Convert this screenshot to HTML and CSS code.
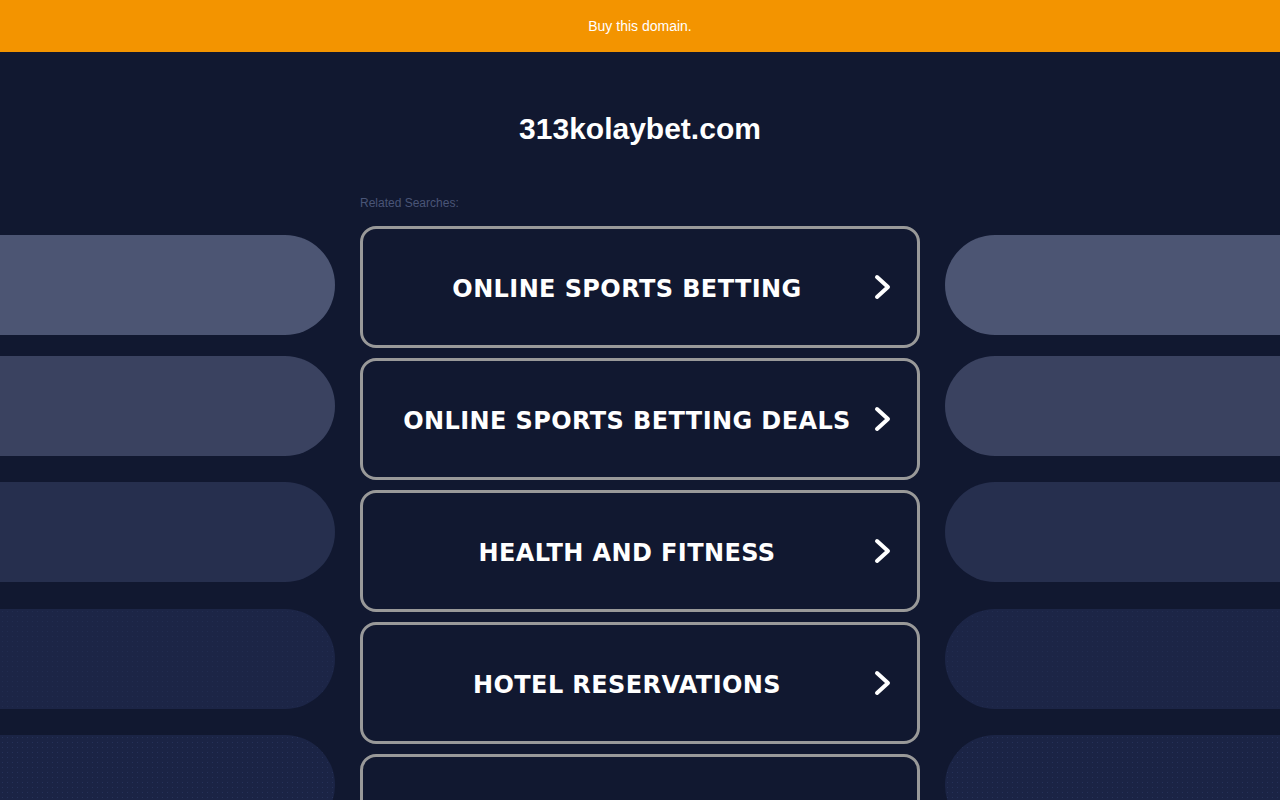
FILE: index.html
```html
<!DOCTYPE html>
<html>
<head>
<meta charset="utf-8">
<title>313kolaybet.com</title>
<link rel="stylesheet" href="styles.css">
</head>
<body>
<div class="topbar"><a class="buy" href="#">Buy this domain.</a></div>
<div class="stage">
  <div class="side side-left">
    <div class="pill p1"></div>
    <div class="pill p2"></div>
    <div class="pill p3"></div>
    <div class="pill p4"></div>
    <div class="pill p5"></div>
  </div>
  <main class="center">
    <h1 class="domain">313kolaybet.com</h1>
    <div class="related">Related Searches:</div>
    <div class="list">
      <a class="item" href="#"><span class="label">ONLINE SPORTS BETTING</span><svg class="chev" viewBox="0 0 20 26" width="20" height="26"><path d="M4 3 L15 13 L4 23" fill="none" stroke="#fff" stroke-width="4" stroke-linecap="round" stroke-linejoin="round"/></svg></a>
      <a class="item" href="#"><span class="label">ONLINE SPORTS BETTING DEALS</span><svg class="chev" viewBox="0 0 20 26" width="20" height="26"><path d="M4 3 L15 13 L4 23" fill="none" stroke="#fff" stroke-width="4" stroke-linecap="round" stroke-linejoin="round"/></svg></a>
      <a class="item" href="#"><span class="label">HEALTH AND FITNESS</span><svg class="chev" viewBox="0 0 20 26" width="20" height="26"><path d="M4 3 L15 13 L4 23" fill="none" stroke="#fff" stroke-width="4" stroke-linecap="round" stroke-linejoin="round"/></svg></a>
      <a class="item" href="#"><span class="label">HOTEL RESERVATIONS</span><svg class="chev" viewBox="0 0 20 26" width="20" height="26"><path d="M4 3 L15 13 L4 23" fill="none" stroke="#fff" stroke-width="4" stroke-linecap="round" stroke-linejoin="round"/></svg></a>
      <a class="item" href="#"><span class="label">CAR INSURANCE</span><svg class="chev" viewBox="0 0 20 26" width="20" height="26"><path d="M4 3 L15 13 L4 23" fill="none" stroke="#fff" stroke-width="4" stroke-linecap="round" stroke-linejoin="round"/></svg></a>
    </div>
  </main>
  <div class="side side-right">
    <div class="pill p1"></div>
    <div class="pill p2"></div>
    <div class="pill p3"></div>
    <div class="pill p4"></div>
    <div class="pill p5"></div>
  </div>
</div>
</body>
</html>
```

FILE: styles.css
```css
* { box-sizing: border-box; }
html, body {
  margin: 0;
  padding: 0;
  height: 100%;
  overflow: hidden;
}
body {
  background: #111830;
  font-family: "Liberation Sans", Arial, sans-serif;
}
.topbar {
  height: 52px;
  background: #f39400;
  display: flex;
  align-items: center;
  justify-content: center;
}
.buy {
  color: #fff;
  font-size: 14px;
  text-decoration: none;
}
.stage {
  display: grid;
  grid-template-columns: 335px 560px 335px;
  column-gap: 25px;
}
.side {
  display: flex;
  flex-direction: column;
  padding-top: 183px;
}
.pill {
  height: 100px;
  width: 100%;
  flex: none;
}
.side-left .pill { border-radius: 0 50px 50px 0; }
.side-right .pill { border-radius: 50px 0 0 50px; }
.pill.p2 { margin-top: 21px; }
.pill.p3 { margin-top: 26px; }
.pill.p4 { margin-top: 27px; }
.pill.p5 { margin-top: 26px; }
.p1 { background: #4c5573; }
.p2 { background: #3a4260; }
.p3 { background: #262f4e; }
.p4 {
  background-color: #1c2546;
  background-image: radial-gradient(rgba(45,58,100,0.35) 0.5px, transparent 0.8px);
  background-size: 5px 5px;
}
.p5 {
  background-color: #1b2445;
  background-image: radial-gradient(rgba(50,65,110,0.5) 0.6px, transparent 0.9px);
  background-size: 5px 5px;
}
.center {
  display: flex;
  flex-direction: column;
}
.domain {
  margin: 59px 0 0;
  height: 36px;
  line-height: 36px;
  text-align: center;
  color: #fff;
  font-size: 30px;
  font-weight: bold;
}
.related {
  margin-top: 49px;
  color: #4a5577;
  font-size: 12px;
  line-height: 14px;
}
.list {
  margin-top: 16px;
  display: flex;
  flex-direction: column;
  gap: 10px;
}
.item {
  height: 122px;
  flex: none;
  border: 3px solid #999;
  border-radius: 16px;
  display: flex;
  align-items: center;
  justify-content: center;
  padding: 3px 26px 0 0;
  position: relative;
  text-decoration: none;
  color: #fff;
}
.label {
  font-family: "DejaVu Sans", Verdana, sans-serif;
  font-weight: bold;
  font-size: 24px;
  letter-spacing: 0.4px;
}
.chev {
  position: absolute;
  right: 24px;
  top: 50%;
  margin-top: -13px;
}
```
